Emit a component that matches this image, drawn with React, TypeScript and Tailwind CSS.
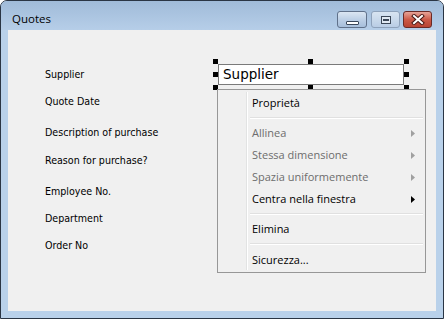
import React from "react";

const labelFont = { fontFamily: '"DejaVu Sans Condensed", "Liberation Sans", sans-serif' };
const uiFont = { fontFamily: '"Open Sans", "Noto Sans", sans-serif' };

function Handle({ x, y }: { x: number; y: number }) {
  return <div className="absolute w-[5px] h-[5px] bg-black" style={{ left: x, top: y }} />;
}

function Arrow({ disabled }: { disabled?: boolean }) {
  return (
    <svg width="4" height="7" viewBox="0 0 4 7" className="absolute right-[8px] top-[8px]">
      <path d="M0 0 L4 3.5 L0 7 Z" fill={disabled ? "#a0a0a0" : "#000"} />
    </svg>
  );
}

function Item({ label, disabled, sub }: { label: string; disabled?: boolean; sub?: boolean }) {
  return (
    <div
      className={`relative h-[22px] flex items-center pl-[32px] text-[11px] ${disabled ? "text-[#6d6d6d]" : "text-black"}`}
    >
      {label}
      {sub && <Arrow disabled={disabled} />}
    </div>
  );
}

function Sep({ tall }: { tall?: boolean }) {
  return (
    <div className={`${tall ? "h-[9px]" : "h-[8px]"} pt-[3px] pl-[30px]`}>
      <div className="h-px bg-[#e0e0e0]" />
      <div className="h-px bg-white" />
    </div>
  );
}

export default function App() {
  return (
    <div className="w-[444px] h-[319px] overflow-hidden bg-white">
      <div className="w-[444px] h-[319px] flex flex-col rounded-t-[7px] border border-[#2a3544] bg-[#b9d1ea] overflow-hidden">
        {/* Title bar */}
        <div className="h-[29px] flex items-start bg-gradient-to-b from-[#a0bbd9] to-[#b6cee8]">
          <div className="pl-[11px] pt-[10px] text-[11.5px] leading-[16px] text-black" style={uiFont}>
            Quotes
          </div>
          <div className="ml-auto flex pt-[10px] pr-[11px]">
            <div className="w-[30px] h-[17px] rounded-[3px] border border-[#60718a] bg-gradient-to-b from-[#dbe6f2] via-[#bdd0e6] to-[#a6bedb] flex items-end justify-center pb-[2px]">
              <div className="w-[13px] h-[4px] border border-[#39475a] bg-white rounded-[1px]" />
            </div>
            <div className="ml-[4px] w-[29px] h-[17px] rounded-[3px] border border-[#8ea2bb] bg-gradient-to-b from-[#d8e4f1] via-[#c9d9eb] to-[#b9cde5] flex items-center justify-center">
              <div className="w-[10px] h-[8px] border border-[#3b4757] bg-[#dfe8f2] flex items-center justify-center">
                <div className="w-[6px] h-[2px] border border-[#3b4757]" />
              </div>
            </div>
            <div className="ml-[3px] w-[29px] h-[17px] rounded-[3px] border border-[#6a2a26] bg-gradient-to-b from-[#e6a398] via-[#cc5a48] to-[#b84433] flex items-center justify-center">
              <svg width="14" height="11" viewBox="0 0 14 11">
                <path d="M3 2 L11 9 M11 2 L3 9" stroke="#4a1a16" strokeWidth="4" strokeLinecap="square" />
                <path d="M3 2 L11 9 M11 2 L3 9" stroke="#ffffff" strokeWidth="2" strokeLinecap="square" />
              </svg>
            </div>
          </div>
        </div>
        {/* Client area */}
        <div className="relative ml-[7px] w-[428px] h-[281px] bg-[#f0f0f0]">
          <div className="flex flex-col pl-[37px] pt-[37px] text-[10.6px] leading-[14px] text-black" style={labelFont}>
            <div>Supplier</div>
            <div className="mt-[13px]">Quote Date</div>
            <div className="mt-[17px]">Description of purchase</div>
            <div className="mt-[14px]">Reason for purchase?</div>
            <div className="mt-[17px]">Employee No.</div>
            <div className="mt-[13px]">Department</div>
            <div className="mt-[13px]">Order No</div>
          </div>

          {/* Selected textbox */}
          <div
            className="absolute left-[210px] top-[34px] w-[186px] h-[21px] border border-[#7a7a7a] bg-white flex items-center pl-[4px] text-[13.5px] text-black"
            style={{ fontFamily: '"DejaVu Sans", "Liberation Sans", sans-serif' }}
          >
            Supplier
          </div>
          <Handle x={205} y={29} />
          <Handle x={300} y={29} />
          <Handle x={396} y={29} />
          <Handle x={205} y={42} />
          <Handle x={396} y={42} />
          <Handle x={205} y={55} />
          <Handle x={300} y={55} />
          <Handle x={396} y={55} />

          {/* Context menu */}
          <div
            className="absolute left-[209px] top-[59px] w-[209px] h-[184px] border border-[#979797] bg-[#f0f0f0] p-[2px]"
            style={uiFont}
          >
            <div className="absolute left-[28px] top-[2px] bottom-[2px] w-px bg-[#e2e3e3]" />
            <div className="absolute left-[29px] top-[2px] bottom-[2px] w-px bg-white" />
            <div className="relative">
              <Item label="Proprietà" />
              <Sep />
              <Item label="Allinea" disabled sub />
              <Item label="Stessa dimensione" disabled sub />
              <Item label="Spazia uniformemente" disabled sub />
              <Item label="Centra nella finestra" sub />
              <Sep />
              <Item label="Elimina" />
              <Sep tall />
              <Item label="Sicurezza..." />
            </div>
          </div>
        </div>
      </div>
    </div>
  );
}
